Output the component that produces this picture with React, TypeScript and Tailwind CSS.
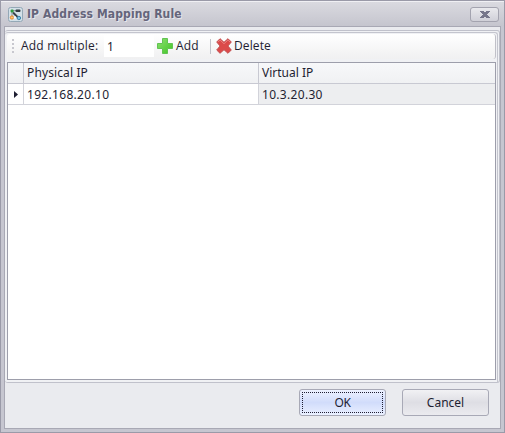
import React from "react";

function AppIcon() {
  return (
    <svg width="15" height="15" viewBox="0 0 15 15" className="shrink-0">
      <rect x="0.5" y="0.5" width="14" height="14" rx="2" fill="#d3e0e8" stroke="#94a8b6" />
      <path d="M5 5.5L10.5 11" stroke="#39434b" strokeWidth="2" fill="none" />
      <path d="M4 4.3V10M4 3.7H8" stroke="#8a969c" fill="none" />
      <rect x="7.5" y="2.5" width="5" height="2.6" rx="1" fill="#323b42" />
      <rect x="2.6" y="2.6" width="3" height="3" rx="1" fill="#2e9a3f" />
      <circle cx="3.9" cy="10.5" r="1.6" fill="#f7c27e" stroke="#ef8a1c" />
      <circle cx="10.9" cy="11" r="1.7" fill="#7cc4e4" stroke="#3c83ad" />
      <circle cx="7" cy="10.5" r="1.2" fill="#f4fafc" />
    </svg>
  );
}

function PlusIcon() {
  return (
    <svg width="16" height="16" viewBox="0 0 16 16" className="shrink-0">
      <defs>
        <linearGradient id="plus" x1="0" y1="0" x2="1" y2="1">
          <stop offset="0" stopColor="#8fe072" />
          <stop offset="1" stopColor="#3fc423" />
        </linearGradient>
      </defs>
      <path d="M5.5 .5h5v5h5v5h-5v5h-5v-5h-5v-5h5z" fill="url(#plus)" stroke="#62c352" strokeLinejoin="round" />
    </svg>
  );
}

function CrossIcon() {
  return (
    <svg width="16" height="16" viewBox="0 0 16 16" className="shrink-0">
      <path
        d="M4 .7L8 4.3 12 .7 15.3 4 11.9 8 15.3 12 12 15.3 8 11.7 4 15.3.7 12 4.1 8 .7 4z"
        fill="#dc4a4a"
        stroke="#c25050"
        strokeLinejoin="round"
      />
      <path d="M2 4L4 2.1 8 5.8 12 2.1 14 4" fill="none" stroke="#ea7c7c" />
    </svg>
  );
}

export default function App() {
  return (
    <div className="flex h-[433px] w-[505px] flex-col border border-[#9a9aa8] bg-[#c6c6d0] px-[3px] pb-[3px] font-['Noto_Sans',sans-serif] text-[#1e1e32]">
      <header className="-mx-[3px] flex h-[25px] shrink-0 items-center border-t border-[#f0f0f4] bg-linear-to-b from-[#dadae0] to-[#c5c5ce] pr-[5px] pl-[7px]">
        <AppIcon />
        <span className="ml-[4px] font-['DejaVu_Sans_Condensed','DejaVu_Sans',sans-serif] text-[12px] leading-[16px] font-bold tracking-[0.11px] whitespace-nowrap text-[#65657b] [text-shadow:1px_1px_0_#e6e6ec]">
          IP Address Mapping Rule
        </span>
        <button className="ml-auto flex h-[15px] w-[29px] items-center justify-center rounded-[3px] border border-[#a3a3af] bg-linear-to-b from-[#e9e9ed] to-[#d0d0d8]">
          <svg width="10" height="7" viewBox="0 0 10 7">
            <path d="M0 0h4v1h2V0h4v1H9v1H8v1H7v1h1v1h1v1h1v1H6V6H4v1H0V6h1V5h1V4h1V3H2V2H1V1H0z" fill="#77778b" />
          </svg>
        </button>
      </header>

      <main className="flex min-h-0 flex-1 flex-col border border-[#a8a8b4] bg-[#eaebef] pt-[3px]">
        <section className="flex h-[353px] shrink-0 flex-col rounded-[3px] border border-l-0 border-[#c0c1cb] bg-[#f0f1f4] pt-px pr-px">
          <div className="flex min-h-0 flex-1 flex-col rounded-t-[3px] border-t border-r border-[#c4c5ce] pr-px pb-[2px] pl-[2px]">
            <div className="mt-px mb-[3px] flex h-[25px] shrink-0 items-center rounded-[3px] border-r border-[#c0c0c8] bg-linear-to-b from-white to-[#f0f0f1] pb-px font-['Open_Sans','Noto_Sans',sans-serif] text-[12px] leading-[16px]">
              <div className="ml-[5px] flex h-[14px] w-[2px] flex-col justify-between">
                <i className="h-[2px] bg-[#c8c8cf]" />
                <i className="h-[2px] bg-[#c8c8cf]" />
                <i className="h-[2px] bg-[#c8c8cf]" />
                <i className="h-[2px] bg-[#c8c8cf]" />
              </div>
              <span className="ml-[7px] w-[83px] tracking-[0.22px] whitespace-nowrap">Add multiple:</span>
              <div className="h-[22px] w-[50px] bg-white pt-[4px] pl-[3px] font-['Noto_Sans',sans-serif]">1</div>
              <div className="ml-[3px] flex items-center gap-[3px]">
                <PlusIcon />
                <span className="w-[26px] tracking-[0.2px]">Add</span>
              </div>
              <div className="ml-[8px] h-[15px] w-px bg-[#c2c2ca]" />
              <div className="ml-[5px] flex items-center gap-[2px]">
                <CrossIcon />
                <span className="tracking-[0.12px]">Delete</span>
              </div>
            </div>

            <div className="grid min-h-0 flex-1 grid-cols-[16px_235px_1fr] grid-rows-[21px_21px_1fr] border border-[#9d9eab] bg-white text-[12px] leading-[20px]">
              <div className="border-r border-b border-[#c8c9d2] bg-linear-to-b from-[#f7f8fa] to-[#f0f1f3]" />
              <div className="border-r border-b border-[#c8c9d2] bg-linear-to-b from-[#f7f8fa] to-[#f0f1f3] pl-[3px] tracking-[0.12px]">Physical IP</div>
              <div className="border-b border-[#c8c9d2] bg-linear-to-b from-[#f7f8fa] to-[#f0f1f3] pl-[3px]">Virtual IP</div>
              <div className="flex items-center justify-center border-r border-b border-[#d2d3da]">
                <svg width="4" height="7" viewBox="0 0 4 7">
                  <path d="M0 0L4 3.5 0 7z" fill="#1e1e32" />
                </svg>
              </div>
              <div className="border-r border-b border-[#d2d3da] pt-px pl-[3px] leading-[19px] tracking-[0.31px]">192.168.20.10</div>
              <div className="border-b border-[#d2d3da] bg-[#edeef0] pt-px pl-[3px] leading-[19px] tracking-[0.31px]">10.3.20.30</div>
            </div>
          </div>
        </section>

        <footer className="mt-[6px] flex justify-end gap-[16px] pr-[11px] text-[12px]">
          <button className="h-[27px] w-[87px] rounded-[3px] border border-[#a8a9b6] bg-linear-to-b from-[#edf1ff] via-[#d1dcfb] to-[#eaf0ff] p-[2px]">
            <span className="flex h-full items-center justify-center border border-dotted border-[#1e1e32] tracking-[-0.3px]">OK</span>
          </button>
          <button className="h-[27px] w-[87px] rounded-[3px] border border-[#a8a9b6] bg-linear-to-b from-[#f1f1f4] via-[#dedee4] to-[#ebebef]">
            Cancel
          </button>
        </footer>
      </main>
    </div>
  );
}
